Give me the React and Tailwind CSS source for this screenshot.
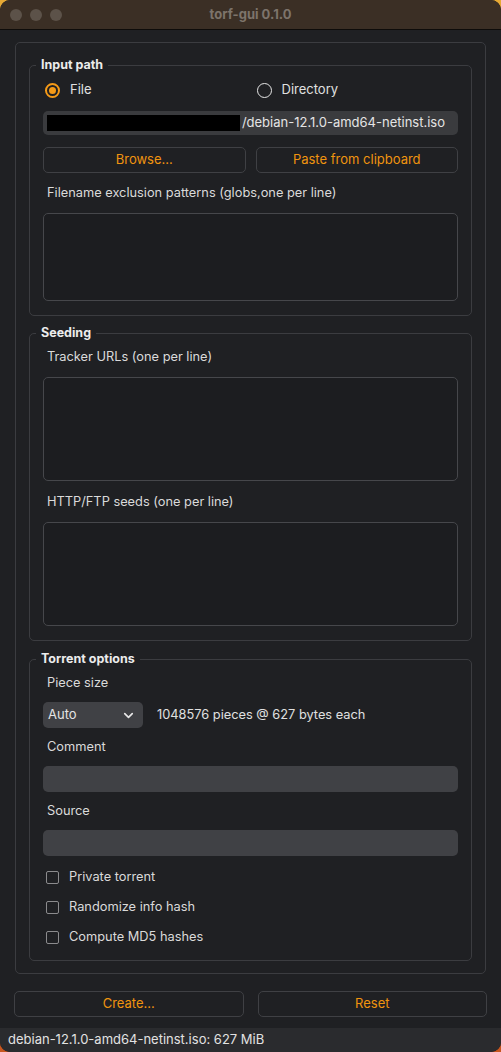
import React from "react";
import { ChevronDown } from "lucide-react";

const font = { fontFamily: "Inter, 'Noto Sans', sans-serif" };

function Group({ title, children, className = "" }) {
  return (
    <div className={"relative rounded-[5px] border border-[#3b3c40] px-[13px] " + className}>
      <div className="absolute left-[6px] top-[-9px] bg-[#1f2023] px-[5px] text-[12.5px] font-bold leading-[16px] text-[#ececec]">
        {title}
      </div>
      {children}
    </div>
  );
}

function Label({ children, className = "" }) {
  return (
    <div className={"flex h-[20px] items-center pl-[4px] text-[12.8px] text-[#dadada] " + className}>
      {children}
    </div>
  );
}

function TextArea({ h, className = "" }) {
  return (
    <div
      className={"rounded-[5px] border border-[#46474b] bg-[#1c1d20] " + className}
      style={{ height: h }}
    />
  );
}

function Btn({ children }) {
  return (
    <div className="flex h-[26px] items-center justify-center rounded-[5px] border border-[#3f4044] bg-[#1f2023] text-[13px] text-[#f0940f]">
      {children}
    </div>
  );
}

function Check({ children, className = "" }) {
  return (
    <div className={"flex h-[20px] items-center " + className}>
      <div className="ml-[3px] h-[13px] w-[13px] rounded-[2px] border border-[#8b8b8d]" />
      <span className="ml-[10px] text-[12.8px] text-[#dadada]">{children}</span>
    </div>
  );
}

export default function App() {
  return (
    <div className="h-[1052px] w-[501px] bg-gradient-to-b from-[#e6a935] to-[#c8561f]" style={font}>
      <div className="flex h-full w-full flex-col overflow-hidden rounded-[10px] bg-[#1f2023]">
        {/* Title bar */}
        <div className="relative flex h-[30px] shrink-0 items-center justify-center border-b border-[#0e0c0a] bg-[#3b2f25]">
          <div className="absolute left-[10px] top-[9px] flex gap-[8px]">
            <div className="h-[12px] w-[12px] rounded-full bg-[#5c5249]" />
            <div className="h-[12px] w-[12px] rounded-full bg-[#5c5249]" />
            <div className="h-[12px] w-[12px] rounded-full bg-[#5c5249]" />
          </div>
          <span className="text-[13px] font-bold text-[#7d746b]">torf-gui 0.1.0</span>
        </div>

        {/* Main frame */}
        <div className="ml-[15px] mr-[15px] mt-[12px] rounded-[5px] border border-[#3b3c40] px-[13px] pb-[12px] pt-[22px]">
          <Group title="Input path" className="pb-[14px] pt-[14px]">
            <div className="grid h-[20px] grid-cols-2 gap-[10px]">
              <div className="flex items-center">
                <div className="ml-[2px] flex h-[15px] w-[15px] items-center justify-center rounded-full border-[2px] border-[#f59a17]">
                  <div className="h-[7px] w-[7px] rounded-full bg-[#f59a17]" />
                </div>
                <span className="ml-[10px] text-[13px] text-[#e0e0e0]">File</span>
              </div>
              <div className="flex items-center">
                <div className="ml-[1px] h-[15px] w-[15px] rounded-full border-[1.5px] border-[#e6e6e6]" />
                <span className="ml-[10px] text-[13px] text-[#e0e0e0]">Directory</span>
              </div>
            </div>
            <div className="mt-[11px] flex h-[24px] items-center overflow-hidden whitespace-nowrap rounded-[5px] bg-[#3a3b3e] pl-[4px] pr-[13px] text-[13px] text-[#e4e4e4]">
              <div className="h-[16px] w-[193px] shrink-0 bg-black" />
              <span className="ml-auto shrink-0">/debian-12.1.0-amd64-netinst.iso</span>
            </div>
            <div className="mt-[12px] grid grid-cols-2 gap-[10px]">
              <Btn>Browse...</Btn>
              <Btn>Paste from clipboard</Btn>
            </div>
            <Label className="mt-[10px]">Filename exclusion patterns (globs,one per line)</Label>
            <TextArea h={88} className="mt-[10px]" />
          </Group>

          <Group title="Seeding" className="mt-[17px] pb-[14px] pt-[13px]">
            <Label>Tracker URLs (one per line)</Label>
            <TextArea h={104} className="mt-[10px]" />
            <Label className="mt-[11px]">HTTP/FTP seeds (one per line)</Label>
            <TextArea h={104} className="mt-[10px]" />
          </Group>

          <Group title="Torrent options" className="mt-[18px] pb-[13px] pt-[13px]">
            <Label>Piece size</Label>
            <div className="mt-[9px] flex h-[26px] items-center">
              <div className="flex h-[26px] w-[100px] items-center justify-between rounded-[5px] bg-[#404145] pl-[5px] pr-[7px] text-[13px] text-[#e4e4e4]">
                <span>Auto</span>
                <ChevronDown size={15} strokeWidth={2.6} color="#e8e8e8" />
              </div>
              <span className="ml-[14px] text-[12.8px] text-[#e0e0e0]">1048576 pieces @ 627 bytes each</span>
            </div>
            <Label className="mt-[9px]">Comment</Label>
            <div className="mt-[9px] h-[26px] rounded-[5px] bg-[#404145]" />
            <Label className="mt-[9px]">Source</Label>
            <div className="mt-[9px] h-[26px] rounded-[5px] bg-[#404145]" />
            <Check className="mt-[11px]">Private torrent</Check>
            <Check className="mt-[10px]">Randomize info hash</Check>
            <Check className="mt-[10px]">Compute MD5 hashes</Check>
          </Group>
        </div>

        {/* Bottom buttons */}
        <div className="mx-[14px] mt-[17px] grid grid-cols-2 gap-[14px]">
          <Btn>Create...</Btn>
          <Btn>Reset</Btn>
        </div>

        {/* Status bar */}
        <div className="mt-auto flex h-[24px] items-center bg-[#2a2b2e] pl-[8px] text-[13px] text-[#e2e2e2]">
          debian-12.1.0-amd64-netinst.iso: 627 MiB
        </div>
      </div>
    </div>
  );
}
